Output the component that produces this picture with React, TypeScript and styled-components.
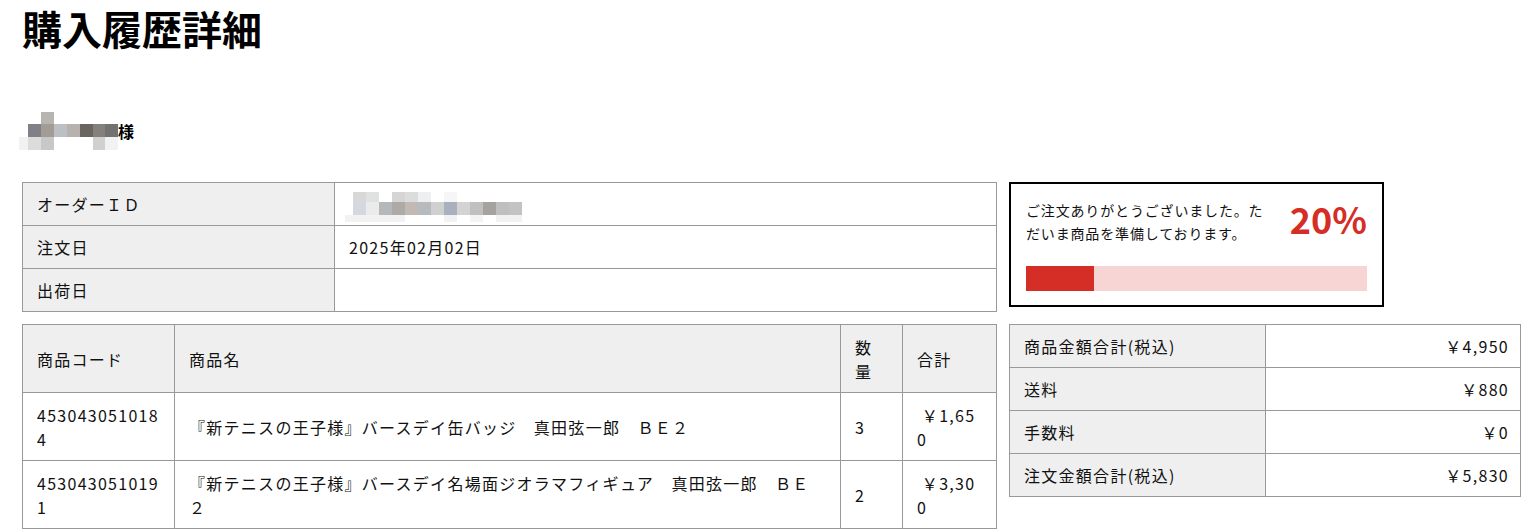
import styled, { createGlobalStyle } from "styled-components";

const GlobalStyle = createGlobalStyle`
  body {
    margin: 0;
    background: #fff;
    color: #111;
    font-family: "Noto Sans CJK JP", "Noto Sans", sans-serif;
    font-size: 16px;
    letter-spacing: 0.08em;
  }
`;

type Block = [number, number, number, number, string];

const nameBlocks: Block[] = [
  [22, 0, 13, 12, "#b8b4b2"],
  [9, 12, 13, 13, "#7f8088"],
  [22, 12, 13, 13, "#a39b96"],
  [35, 12, 13, 13, "#bcc0c4"],
  [48, 12, 13, 13, "#b8b2ae"],
  [61, 12, 13, 13, "#6b655f"],
  [74, 12, 12, 13, "#84817c"],
  [86, 12, 13, 13, "#727270"],
  [0, 25, 9, 13, "#f2f2f2"],
  [9, 25, 13, 13, "#dcdcdc"],
  [22, 25, 13, 13, "#c8c8c8"],
  [74, 25, 12, 13, "#d0d0d0"],
  [86, 25, 13, 13, "#f2f2f2"],
];

const idBlocks: Block[] = [
  [8, 0, 13, 10, "#d8d8d8"],
  [21, 0, 13, 10, "#e0e2e2"],
  [47, 0, 13, 10, "#d6d4d4"],
  [60, 0, 13, 10, "#dcdcdc"],
  [73, 0, 13, 10, "#efefef"],
  [99, 0, 13, 10, "#f6f6f6"],
  [8, 10, 13, 13, "#d4d8df"],
  [21, 10, 13, 13, "#ebebeb"],
  [34, 10, 13, 13, "#b4b8bb"],
  [47, 10, 13, 13, "#aeaaa8"],
  [60, 10, 13, 13, "#c2b9b2"],
  [73, 10, 13, 13, "#b8bbbd"],
  [86, 10, 13, 13, "#cfd1d0"],
  [99, 10, 13, 13, "#a9b1bf"],
  [112, 10, 13, 13, "#d3d3d3"],
  [125, 10, 13, 13, "#c1c0be"],
  [138, 10, 13, 13, "#a5a3a0"],
  [151, 10, 13, 13, "#bfbfbf"],
  [164, 10, 13, 13, "#c4c2c2"],
  [0, 23, 60, 7, "#f2f2f2"],
  [99, 23, 13, 7, "#f2f2f2"],
  [125, 23, 13, 7, "#f4f4f4"],
  [151, 23, 26, 7, "#f2f2f2"],
];

const Mosaic = ({ blocks, width, height, className }: { blocks: Block[]; width: number; height: number; className?: string }) => (
  <svg className={className} width={width} height={height} viewBox={`0 0 ${width} ${height}`}>
    {blocks.map(([x, y, w, h, c], i) => (
      <rect key={i} x={x} y={y} width={w} height={h} fill={c} />
    ))}
  </svg>
);

const items = [
  { code: "4530430510184", name: "『新テニスの王子様』バースデイ缶バッジ　真田弦一郎　ＢＥ２", qty: "3", total: "\u00a0￥1,650" },
  { code: "4530430510191", name: "『新テニスの王子様』バースデイ名場面ジオラマフィギュア　真田弦一郎　ＢＥ２", qty: "2", total: "\u00a0￥3,300" },
];

const summary = [
  { label: "商品金額合計(税込)", value: "￥4,950" },
  { label: "送料", value: "￥880" },
  { label: "手数料", value: "￥0" },
  { label: "注文金額合計(税込)", value: "￥5,830" },
];

const progress = 20;

const App = () => {
  return (
    <Page>
      <GlobalStyle />
      <Title>購入履歴詳細</Title>
      <Customer>
        <NameMosaic blocks={nameBlocks} width={99} height={38} />
        <Honorific>様</Honorific>
      </Customer>

      <Layout>
        <Table>
          <colgroup>
            <col style={{ width: 312 }} />
            <col />
          </colgroup>
          <tbody>
            <tr>
              <HeadCell>オーダーＩＤ</HeadCell>
              <Cell>
                <IdMosaic blocks={idBlocks} width={177} height={30} />
              </Cell>
            </tr>
            <tr>
              <HeadCell>注文日</HeadCell>
              <Cell>2025年02月02日</Cell>
            </tr>
            <tr>
              <HeadCell>出荷日</HeadCell>
              <Cell></Cell>
            </tr>
          </tbody>
        </Table>

        <StatusBox>
          <StatusTop>
            <StatusMessage>ご注文ありがとうございました。ただいま商品を準備しております。</StatusMessage>
            <Percent>{progress}%</Percent>
          </StatusTop>
          <Bar>
            <BarFill $value={progress} />
          </Bar>
        </StatusBox>

        <Table>
          <colgroup>
            <col style={{ width: 152 }} />
            <col />
            <col style={{ width: 62 }} />
            <col style={{ width: 94 }} />
          </colgroup>
          <thead>
            <tr>
              <HeadCell $tall>商品コード</HeadCell>
              <HeadCell $tall>商品名</HeadCell>
              <HeadCell $tall>数量</HeadCell>
              <HeadCell $tall>合計</HeadCell>
            </tr>
          </thead>
          <tbody>
            {items.map((item) => (
              <tr key={item.code}>
                <Cell $tall>{item.code}</Cell>
                <Cell $tall>{item.name}</Cell>
                <Cell $tall>{item.qty}</Cell>
                <Cell $tall>{item.total}</Cell>
              </tr>
            ))}
          </tbody>
        </Table>

        <Table>
          <tbody>
            {summary.map((row) => (
              <tr key={row.label}>
                <HeadCell>{row.label}</HeadCell>
                <Cell $align="right">{row.value}</Cell>
              </tr>
            ))}
          </tbody>
        </Table>
      </Layout>
    </Page>
  );
};

export default App;

const Page = styled.div`
  padding: 4px 22px 0;
`;

const Title = styled.h1`
  margin: 0;
  font-size: 40px;
  line-height: 48px;
  font-weight: 700;
  letter-spacing: 0;
  color: #000;
`;

const Customer = styled.div`
  display: flex;
  align-items: center;
  margin-top: 60px;
  height: 38px;
`;

const NameMosaic = styled(Mosaic)`
  display: block;
  margin-left: -3px;
`;

const IdMosaic = styled(Mosaic)`
  display: block;
  margin: 0 0 -6px -4px;
`;

const Honorific = styled.span`
  font-weight: 700;
  line-height: 24px;
  letter-spacing: 0;
  color: #000;
`;

const Layout = styled.div`
  display: grid;
  grid-template-columns: 975px 512px;
  column-gap: 12px;
  row-gap: 12px;
  align-items: start;
  margin-top: 32px;
`;

const Table = styled.table`
  width: 100%;
  border-collapse: collapse;
  table-layout: fixed;
`;

const HeadCell = styled.th<{ $tall?: boolean }>`
  border: 1px solid #999;
  background: #efefef;
  padding: ${(p) => (p.$tall ? "9.5px 14px" : "9px 14px")};
  line-height: 24px;
  font-weight: 400;
  text-align: left;
  vertical-align: middle;
  word-break: break-all;
`;

const Cell = styled.td<{ $align?: "left" | "right"; $tall?: boolean }>`
  border: 1px solid #999;
  padding: ${(p) => (p.$tall ? "9.5px" : "9px")} ${(p) => (p.$align === "right" ? "11px" : "14px")}
    ${(p) => (p.$tall ? "9.5px" : "9px")} 14px;
  line-height: 24px;
  text-align: ${(p) => p.$align ?? "left"};
  vertical-align: middle;
  word-break: break-all;
`;

const StatusBox = styled.div`
  width: 375px;
  box-sizing: border-box;
  border: 2px solid #000;
  padding: 15px 15px 14px;
`;

const StatusTop = styled.div`
  display: flex;
  justify-content: space-between;
  align-items: flex-start;
`;

const StatusMessage = styled.p`
  margin: 0;
  width: 245px;
  font-size: 14px;
  line-height: 23px;
  letter-spacing: 0.06em;
`;

const Percent = styled.span`
  margin-top: 1px;
  font-size: 36px;
  line-height: 36px;
  font-weight: 700;
  letter-spacing: 0;
  color: #d42e27;
`;

const Bar = styled.div`
  margin-top: 21px;
  height: 25px;
  background: #f7d5d5;
`;

const BarFill = styled.div<{ $value: number }>`
  width: ${(p) => p.$value}%;
  height: 100%;
  background: #d42e27;
`;
